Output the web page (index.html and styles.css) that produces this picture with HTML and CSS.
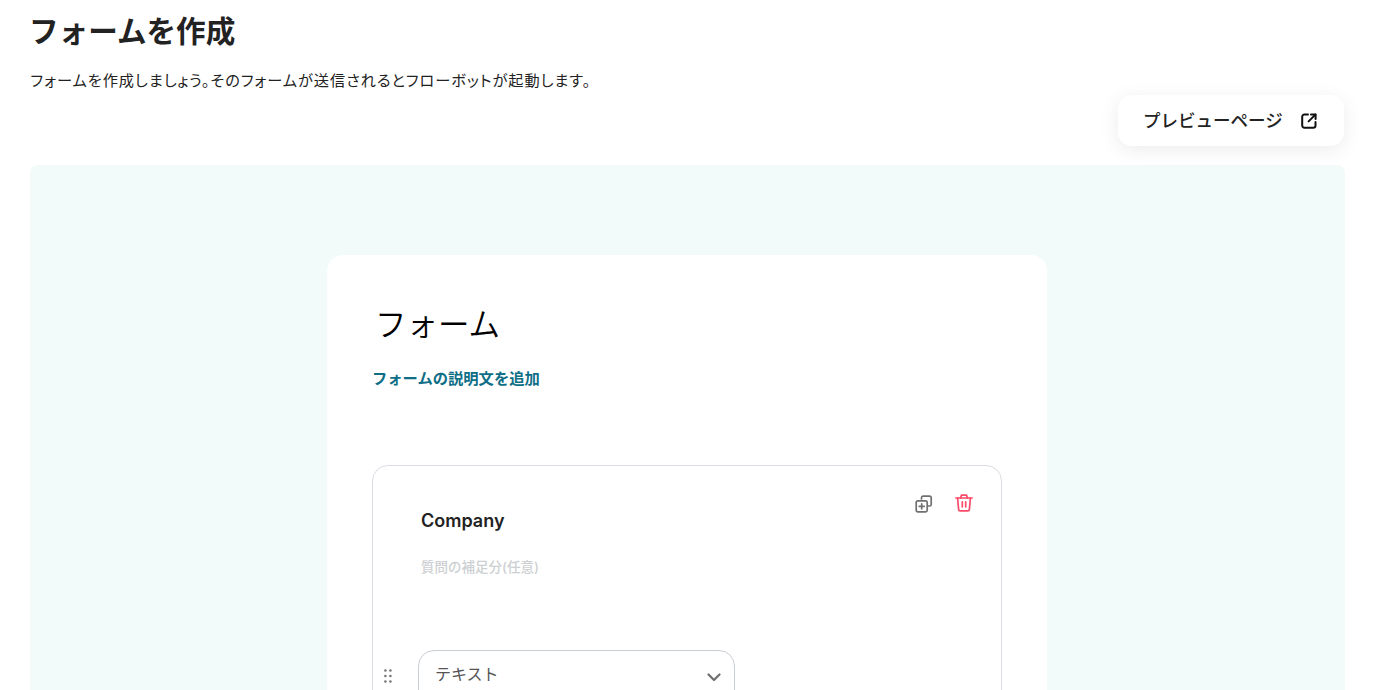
FILE: index.html
```html
<!DOCTYPE html>
<html lang="ja">
<head>
<meta charset="utf-8">
<title>フォームを作成</title>
<link rel="stylesheet" href="styles.css">
</head>
<body>
<main class="page">
  <h1 class="page-title">フォームを作成</h1>
  <p class="page-desc">フォームを作成しましょう。そのフォームが送信されるとフローボットが起動します。</p>
  <div class="toolbar">
    <button class="preview-btn" type="button">
      <span>プレビューページ</span>
      <svg class="preview-icon" viewBox="0 0 16 16" fill="none" stroke="#111" stroke-width="2" stroke-linecap="round" stroke-linejoin="round"><path d="M7 1.5H3.4A2.2 2.2 0 0 0 1.2 3.7v8.9a2.2 2.2 0 0 0 2.2 2.2h8.9a2.2 2.2 0 0 0 2.2-2.2V9"/><path d="M10 1.4h4.6V6"/><path d="M14.4 1.6 7.6 8.4"/></svg>
    </button>
  </div>
  <section class="canvas">
    <div class="form-card">
      <h2 class="form-title">フォーム</h2>
      <a class="form-add-desc">フォームの説明文を追加</a>
      <div class="question">
        <div class="question-actions">
          <svg class="action-icon copy" viewBox="0 0 18 18" fill="none" stroke="#707070" stroke-width="1.7" stroke-linejoin="round" stroke-linecap="round"><path d="M6.5 4V2.8A1.6 1.6 0 0 1 8 1.2h6.6a1.6 1.6 0 0 1 1.6 1.6v6.6a1.6 1.6 0 0 1-1.6 1.6h-1.2"/><rect x="1.2" y="5.8" width="11" height="11" rx="1.6"/><path d="M6.7 8.8v5M4.2 11.3h5"/></svg>
          <svg class="action-icon trash" viewBox="0 0 18 18" fill="none" stroke="#fb4b68" stroke-width="1.7" stroke-linejoin="round" stroke-linecap="round"><path d="M.8 4h16.4"/><path d="M5.6 4 6.4 1.2h5.2L12.4 4"/><path d="M2.6 4l1 11.4a1.6 1.6 0 0 0 1.6 1.5h7.6a1.6 1.6 0 0 0 1.6-1.5L15.4 4"/><path d="M7.3 7.8v5M10.7 7.8v5"/></svg>
        </div>
        <div class="question-name">Company</div>
        <div class="question-help">質問の補足分(任意)</div>
        <div class="type-row">
          <svg class="drag" viewBox="0 0 8 14" fill="#777"><circle cx="1.4" cy="1.5" r="1.3"/><circle cx="6.4" cy="1.5" r="1.3"/><circle cx="1.4" cy="7" r="1.3"/><circle cx="6.4" cy="7" r="1.3"/><circle cx="1.4" cy="12.5" r="1.3"/><circle cx="6.4" cy="12.5" r="1.3"/></svg>
          <div class="type-select">
            <span>テキスト</span>
            <svg class="chevron" viewBox="0 0 14 9" fill="none" stroke="#6f6f6f" stroke-width="2.2" stroke-linecap="round" stroke-linejoin="round"><path d="M1.5 1.5 7 7l5.5-5.5"/></svg>
          </div>
        </div>
      </div>
    </div>
  </section>
</main>
</body>
</html>
```

FILE: styles.css
```css
* { box-sizing: border-box; }
html, body { margin: 0; height: 690px; overflow: hidden; background: #fff; }
body { font-family: Inter, "Noto Sans CJK JP", sans-serif; color: #222; }
.page { padding: 0 43px 0 30px; }
.page-title { margin: 0 0 0 -1px; padding-top: 11px; height: 51px; font-size: 29.6px; line-height: 40px; font-weight: 600; color: #222; }
.page-desc { margin: 19px 0 0 .5px; font-size: 15.2px; line-height: 22px; letter-spacing: .98px; color: #222; font-feature-settings: "palt"; }
.toolbar { display: flex; justify-content: flex-end; margin-top: 3px; padding-right: 1px; }
.preview-btn { display: flex; align-items: center; justify-content: space-between; width: 226px; height: 51px; padding: 0 27px 2px 25px; border: 0; border-radius: 14px; background: #fff; box-shadow: 0 4px 20px rgba(0,0,0,.08); font: 500 17.5px Inter, "Noto Sans CJK JP", sans-serif; color: #222; }
.preview-icon { width: 16px; height: 16px; margin-top: 2px; }
.canvas { margin-top: 19px; height: 600px; padding: 90px 1px 0 0; border-radius: 8px; background: #f3fbfa; display: flex; justify-content: center; }
.form-card { width: 720px; height: 600px; padding: 0 45px; border-radius: 16px; background: #fff; }
.form-title { margin: 0; padding: 48px 0 0 3px; font-size: 31.5px; line-height: 44px; font-weight: 350; color: #000; }
.form-add-desc { display: block; margin-top: 21px; font-size: 15.3px; line-height: 22px; font-weight: 600; color: #0e6e86; }
.question { position: relative; margin-top: 75px; height: 400px; padding: 43px 46px 0 48px; border: 1px solid #d9dde2; border-radius: 16px; }
.question-actions { position: absolute; top: 28px; right: 28px; display: flex; align-items: flex-start; gap: 22px; }
.action-icon { width: 18px; height: 18px; display: block; }
.copy { margin-top: 1px; }
.question-name { font-size: 18px; line-height: 24px; font-weight: 600; color: #222; }
.question-help { margin-top: 24px; font-size: 13.5px; line-height: 20px; font-weight: 500; color: #ccd0d2; }
.type-row { display: flex; align-items: flex-start; margin-top: 73px; margin-left: -37px; }
.drag { width: 8px; height: 14px; margin-top: 19px; margin-right: 26px; }
.type-select { display: flex; justify-content: space-between; width: 317px; height: 60px; padding: 12px 13px 0 16px; border: 1px solid #c9cdd4; border-radius: 16px; font-size: 16px; line-height: 22px; color: #555; }
.chevron { width: 14px; height: 9px; margin-top: 10px; }
```
